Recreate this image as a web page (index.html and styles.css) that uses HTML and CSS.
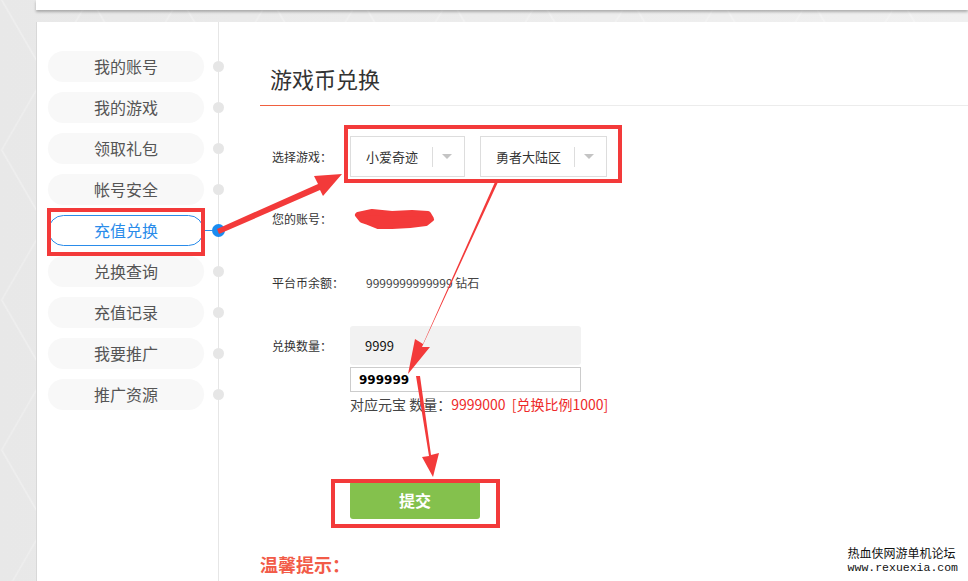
FILE: index.html
```html
<!DOCTYPE html>
<html lang="zh-CN">
<head>
    <meta charset="UTF-8">
    <title>游戏币兑换</title>
    <link rel="stylesheet" href="styles.css">
</head>
<body>
<div class="topbar"></div>

<div class="main">
    <!-- 左侧菜单 -->
    <ul class="side-menu">
        <li class="menu-item"><span class="pill">我的账号</span><i class="dot"></i></li>
        <li class="menu-item"><span class="pill">我的游戏</span><i class="dot"></i></li>
        <li class="menu-item"><span class="pill">领取礼包</span><i class="dot"></i></li>
        <li class="menu-item"><span class="pill">帐号安全</span><i class="dot"></i></li>
        <li class="menu-item active"><span class="pill">充值兑换</span><i class="link"></i><i class="dot"></i></li>
        <li class="menu-item"><span class="pill">兑换查询</span><i class="dot"></i></li>
        <li class="menu-item"><span class="pill">充值记录</span><i class="dot"></i></li>
        <li class="menu-item"><span class="pill">我要推广</span><i class="dot"></i></li>
        <li class="menu-item"><span class="pill">推广资源</span><i class="dot"></i></li>
    </ul>

    <!-- 兑换表单 -->
    <div class="content">
        <h2 class="title">游戏币兑换</h2>

        <div class="form">
            <div class="row row-game">
                <label class="label">选择游戏：</label>
                <div class="selects">
                    <div class="select sel-game">小爱奇迹<span class="sep"></span><span class="caret"></span></div>
                    <div class="select sel-server">勇者大陆区<span class="sep"></span><span class="caret"></span></div>
                </div>
            </div>

            <div class="row row-account">
                <label class="label">您的账号：</label>
                <span class="value"></span>
            </div>

            <div class="row row-balance">
                <label class="label">平台币余额：</label>
                <span class="value">9999999999999 钻石</span>
            </div>

            <div class="row row-amount">
                <label class="label">兑换数量：</label>
                <div class="amount-col">
                    <div class="amount-box">9999</div>
                    <input class="amount-input" type="text" value="999999">
                    <p class="hint">对应元宝 数量：<span class="red">9999000</span>&nbsp;&nbsp;<span class="red">[兑换比例1000]</span></p>
                </div>
            </div>

            <div class="row row-submit">
                <button class="btn-submit">提交</button>
            </div>
        </div>

        <h3 class="tips">温馨提示：</h3>
    </div>
</div>

<!-- 标注层 -->
<svg class="marks" width="968" height="581" viewBox="0 0 968 581">
    <g fill="none" stroke="#f33a3a" stroke-width="4">
        <rect x="49" y="210" width="154" height="44"/>
        <rect x="346" y="127" width="274" height="54"/>
        <rect x="333" y="481" width="165" height="45"/>
    </g>
    <path d="M358 215 L372 212 L392 214 L412 213 L428 214 L431 219 L426 223 L410 225 L392 226 L378 226 L368 222 L362 220 Z"
          fill="#f33a3a" stroke="#f33a3a" stroke-width="6" stroke-linejoin="round"/>
    <g fill="#f33a3a">
        <polygon points="219,234 217,229 318,184 314,176 342,174 323,196 320,190"/>
        <polygon points="498,182 495,182 423,344 415,339 408,374 430,347 422,347"/>
        <polygon points="416,376 420,376 431,455 439,453 433,477 422,457 429,456"/>
    </g>
</svg>

<div class="watermark">
    <div class="wm-name">热血侠网游单机论坛</div>
    <div class="wm-url">www.rexuexia.com</div>
</div>
</body>
</html>
```

FILE: styles.css
```css
* {
    box-sizing: border-box;
}

body {
    margin: 0;
    width: 968px;
    height: 581px;
    overflow: hidden;
    position: relative;
    font-family: "Noto Sans CJK SC", "Noto Sans", sans-serif;
    color: #333;
    background-color: #ebebeb;
    background-image:
        linear-gradient(60deg, transparent 49%, rgba(255, 255, 255, 0.3) 50%, transparent 51%),
        linear-gradient(120deg, transparent 49%, rgba(255, 255, 255, 0.25) 50%, transparent 51%),
        linear-gradient(90deg, #e8e8e8, #f0f0f0);
    background-size: 90px 150px, 90px 150px, 100% 100%;
}

.topbar {
    margin-left: 36px;
    height: 10px;
    background: #fff;
    box-shadow: 0 2px 3px rgba(0, 0, 0, 0.28);
}

.main {
    margin: 12px 0 0 36px;
    height: 559px;
    display: flex;
    background: #fff;
    border-left: 1px solid #d8d8d8;
}

/* 左侧菜单 */
.side-menu {
    list-style: none;
    margin: 0;
    padding: 29px 0 0;
    width: 182px;
    flex-shrink: 0;
    border-right: 1px solid #e6e6e6;
}

.menu-item {
    position: relative;
    height: 31px;
    margin-bottom: 10px;
    padding-left: 11px;
}

.pill {
    display: block;
    width: 156px;
    height: 31px;
    line-height: 31px;
    text-align: center;
    font-size: 16px;
    color: #555;
    background: #f8f8f8;
    border-radius: 16px;
}

.dot {
    position: absolute;
    right: -6px;
    top: 10px;
    width: 11px;
    height: 11px;
    border-radius: 50%;
    background: #e6e6e6;
}

.menu-item.active .pill {
    background: #fff;
    color: #2a8cea;
    border: 1px solid #2a8cea;
    line-height: 29px;
}

.menu-item.active .dot {
    right: -7px;
    top: 9px;
    width: 13px;
    height: 13px;
    background: #1a8cf0;
}

.link {
    position: absolute;
    left: 167px;
    top: 15px;
    width: 12px;
    height: 1px;
    background: #2a8cea;
}

/* 兑换表单 */
.content {
    flex: 1;
    padding-left: 41px;
}

.title {
    position: relative;
    margin: 34px 0 0;
    padding-left: 10px;
    height: 50px;
    line-height: 44px;
    font-size: 22px;
    font-weight: normal;
    color: #333;
    border-bottom: 1px solid #ececec;
}

.title::after {
    content: "";
    position: absolute;
    left: 0;
    bottom: -1px;
    width: 130px;
    height: 1px;
    background: #f0603f;
}

.form {
    padding-left: 12px;
}

.row {
    display: flex;
    align-items: center;
}

.label {
    width: 78px;
    flex-shrink: 0;
    font-size: 12px;
    color: #333;
}

.value {
    font-size: 12px;
    color: #444;
    padding-left: 16px;
}

.row-game {
    margin-top: 30px;
}

.selects {
    display: flex;
    gap: 15px;
}

.select {
    position: relative;
    height: 41px;
    line-height: 39px;
    padding-left: 15px;
    font-size: 13px;
    color: #333;
    border: 1px solid #ddd;
}

.sel-game {
    width: 115px;
}

.sel-server {
    width: 127px;
}

.sep {
    position: absolute;
    right: 31px;
    top: 10px;
    width: 1px;
    height: 20px;
    background: #ddd;
}

.caret {
    position: absolute;
    right: 12px;
    top: 17px;
    border-left: 5px solid transparent;
    border-right: 5px solid transparent;
    border-top: 5px solid #c4c4c4;
}

.row-account {
    margin-top: 31px;
    height: 20px;
}

.row-balance {
    margin-top: 44px;
    height: 20px;
}

.row-amount {
    margin-top: 34px;
    align-items: flex-start;
}

.row-amount .label {
    line-height: 39px;
}

.amount-col {
    width: 231px;
}

.amount-box {
    height: 39px;
    line-height: 39px;
    padding-left: 15px;
    font-size: 13px;
    color: #111;
    background: #f2f2f2;
    border-radius: 3px;
}

.amount-input {
    display: block;
    width: 231px;
    height: 25px;
    margin-top: 2px;
    padding: 0 8px;
    font-family: "DejaVu Sans", sans-serif;
    font-size: 12px;
    font-weight: bold;
    color: #000;
    border: 1px solid #ccc;
    outline: none;
}

.hint {
    margin: 1px 0 0;
    white-space: nowrap;
    font-size: 14px;
    line-height: 22px;
    color: #444;
}

.red {
    color: #ee2a2a;
}

.row-submit {
    margin-top: 66px;
    padding-left: 78px;
}

.btn-submit {
    width: 130px;
    height: 38px;
    border: none;
    border-radius: 3px;
    background: #84c14d;
    color: #fff;
    font-family: inherit;
    font-size: 16px;
    font-weight: bold;
}

.tips {
    margin: 33px 0 0;
    font-size: 18px;
    line-height: 24px;
    color: #f25b48;
}

/* 标注层 */
.marks {
    position: absolute;
    left: 0;
    top: 0;
    pointer-events: none;
}

.watermark {
    position: absolute;
    right: 10px;
    bottom: 7px;
    white-space: nowrap;
    color: #111;
    text-shadow: 1px 0 #fff, -1px 0 #fff, 0 1px #fff, 0 -1px #fff;
}

.wm-name {
    font-size: 12px;
    line-height: 17px;
}

.wm-url {
    font-family: "Liberation Mono", monospace;
    font-size: 11.5px;
    line-height: 13px;
}
```
